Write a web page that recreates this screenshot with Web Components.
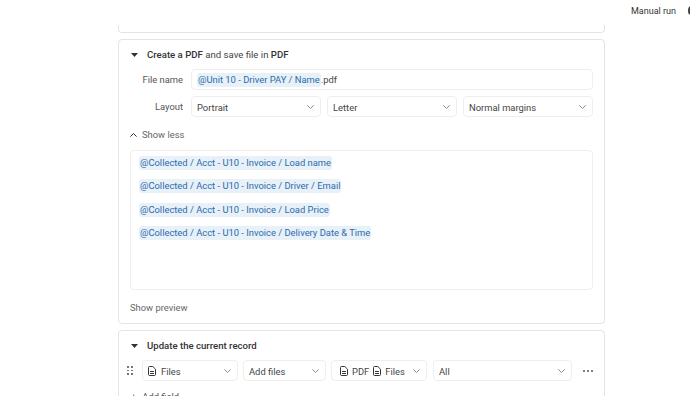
<!DOCTYPE html>
<html><head><meta charset="utf-8"><title>PDF</title>
<style>
html,body{margin:0;padding:0;background:#fff;}
body{font:9.4px Roboto,"Noto Sans",sans-serif;color:#333;width:690px;height:403px;overflow:hidden;}
</style></head><body>
<app-page></app-page>
<script>
const chev='<svg width="7" height="4" viewBox="0 0 7 4" fill="none" stroke="#8a8a8a" stroke-width="1"><path d="M.4.4l3.100 3.100L6.600.4"/></svg>';
const doc='<svg width="8" height="10" viewBox="0 0 8 10" fill="none" stroke="#333" stroke-width="1"><path d="M.5 1.500a1 1 0 0 1 1-1h3.300l2.700 2.700v5.300a1 1 0 0 1-1 1h-5a1 1 0 0 1-1-1z"/><path d="M2 5.500h4M2 7.500h4"/></svg>';
const tri='<svg width="7" height="4" viewBox="0 0 7 4"><path d="M0 0h7L3.500 4z" fill="#333"/></svg>';

function def(name,css,html){
  customElements.define(name,class extends HTMLElement{
    constructor(){super();const r=this.attachShadow({mode:'open'});
      r.innerHTML='<style>'+css+'</style>'+html;}
  });
}

def('x-pill',':host{display:inline-block;background:#e8f0f8;color:#2a6cad;border-radius:3px;padding:0 1px;line-height:14px;white-space:nowrap;}','<slot></slot>');

def('x-box',`:host{display:flex;align-items:center;box-sizing:border-box;height:21px;border:1px solid #eeeeee;border-radius:4px;padding:1px 6px 0 5px;gap:3px;color:#444;white-space:nowrap;background:#fff;min-width:0;}
.s{flex:1;display:flex;align-items:center;gap:var(--g,5px);min-width:0;}
.c{display:none;flex:none;}
:host([select]) .c{display:flex;}`,
 '<div class="s"><slot></slot></div><span class="c">'+chev+'</span>');

def('x-card',`:host{display:block;box-sizing:border-box;border:1px solid #e4e4e4;border-radius:4px;background:#fff;padding:8px 11px 0 11px;}
.h{display:flex;align-items:center;height:13px;font-weight:500;font-size:9.600px;color:#333;gap:9px;margin-left:1px;}
.t{display:flex;width:7px;}`,
 `<div class="h"><span class="t">${tri}</span><span><slot name="title"></slot></span></div><slot></slot>`);

def('x-row',`:host{display:flex;align-items:center;gap:8px;margin-top:6px;}
.l{width:53px;text-align:right;color:#555;flex:none;}`,
 '<span class="l"><slot name="label"></slot></span><slot></slot>');

def('x-topbar',`:host{display:flex;justify-content:flex-end;align-items:flex-start;height:0;color:#333;}
.m{margin-top:4px;line-height:14px;white-space:nowrap;font-size:9px;}
.g{margin-left:12px;margin-top:6px;width:6px;height:9px;border-radius:50%;background:#444;flex:none;margin-right:-4px;}`,
 '<span class="m">Manual run</span><span class="g"></span>');

def('app-page',`:host{display:block;width:690px;height:396px;overflow:hidden;}
.col{width:487px;margin-left:118px;display:flex;flex-direction:column;gap:6px;}
.prev{box-sizing:border-box;height:8px;margin-top:25px;border:1px solid #e4e4e4;border-top:none;border-radius:0 0 4px 4px;}
.more{display:flex;align-items:center;gap:5px;margin-top:11px;color:#666;height:13px;}
.ta{box-sizing:border-box;height:140px;border:1px solid #eeeeee;border-radius:4px;margin-top:9px;padding:4.500px 8px;display:flex;flex-direction:column;align-items:flex-start;gap:9.500px;}
.sp{color:#666;margin-top:11px;height:13px;line-height:13px;}
.pdf{height:285px;}
.upd{height:80px;}
.grow{flex:1;min-width:0;}
.three{flex:1;display:flex;gap:6px;min-width:0;}
.three x-box{flex:1;}
.fr{display:flex;align-items:center;gap:5px;margin-top:8px;}
.grip{flex:none;width:6px;margin:0 4px 0 -3px;display:grid;grid-template-columns:2px 2px;gap:2px;}
.grip i{width:1.500px;height:1.500px;background:#777;display:block;}
.dots{flex:none;display:flex;gap:2px;padding-left:6px;}
.dots i{width:2px;height:2px;border-radius:50%;background:#555;display:block;}
.add{margin-top:9px;color:#555;display:flex;gap:6px;padding-left:1px;line-height:14px;}
.in{margin-left:3px;display:flex;}
`,
`<x-topbar></x-topbar>
<div class="col">
  <div class="prev"></div>
  <x-card class="pdf">
    <span slot="title">Create a PDF <span style="font-weight:400;color:#444">and save file in</span> PDF</span>
    <x-row style="margin-top:8px"><span slot="label">File name</span><x-box class="grow"><span><x-pill>@Unit 10 - Driver PAY / Name</x-pill>.pdf</span></x-box></x-row>
    <x-row><span slot="label">Layout</span><div class="three"><x-box select>Portrait</x-box><x-box select>Letter</x-box><x-box select>Normal margins</x-box></div></x-row>
    <div class="more"><svg width="7" height="4" viewBox="0 0 7 4" fill="none" stroke="#333"><path d="M.4 3.600L3.500.5l3.100 3.100"/></svg>Show less</div>
    <div class="ta">
      <x-pill>@Collected / Acct - U10 - Invoice / Load name</x-pill>
      <x-pill>@Collected / Acct - U10 - Invoice / Driver / Email</x-pill>
      <x-pill>@Collected / Acct - U10 - Invoice / Load Price</x-pill>
      <x-pill>@Collected / Acct - U10 - Invoice / Delivery Date &amp; Time</x-pill>
    </div>
    <div class="sp">Show preview</div>
  </x-card>
  <x-card class="upd">
    <span slot="title">Update the current record</span>
    <div class="fr">
      <span class="grip"><i></i><i></i><i></i><i></i><i></i><i></i></span>
      <x-box select style="width:96px;flex:none">${doc}Files</x-box>
      <x-box select style="width:83px;flex:none">Add files</x-box>
      <x-box select style="width:96px;flex:none;margin-right:1px;--g:4px"><span class="in">${doc}</span>PDF${doc}Files</x-box>
      <x-box select class="grow">All</x-box>
      <span class="dots"><i></i><i></i><i></i></span>
    </div>
    <div class="add"><span>+</span><span>Add field</span></div>
  </x-card>
</div>`);
</script>
</body></html>
